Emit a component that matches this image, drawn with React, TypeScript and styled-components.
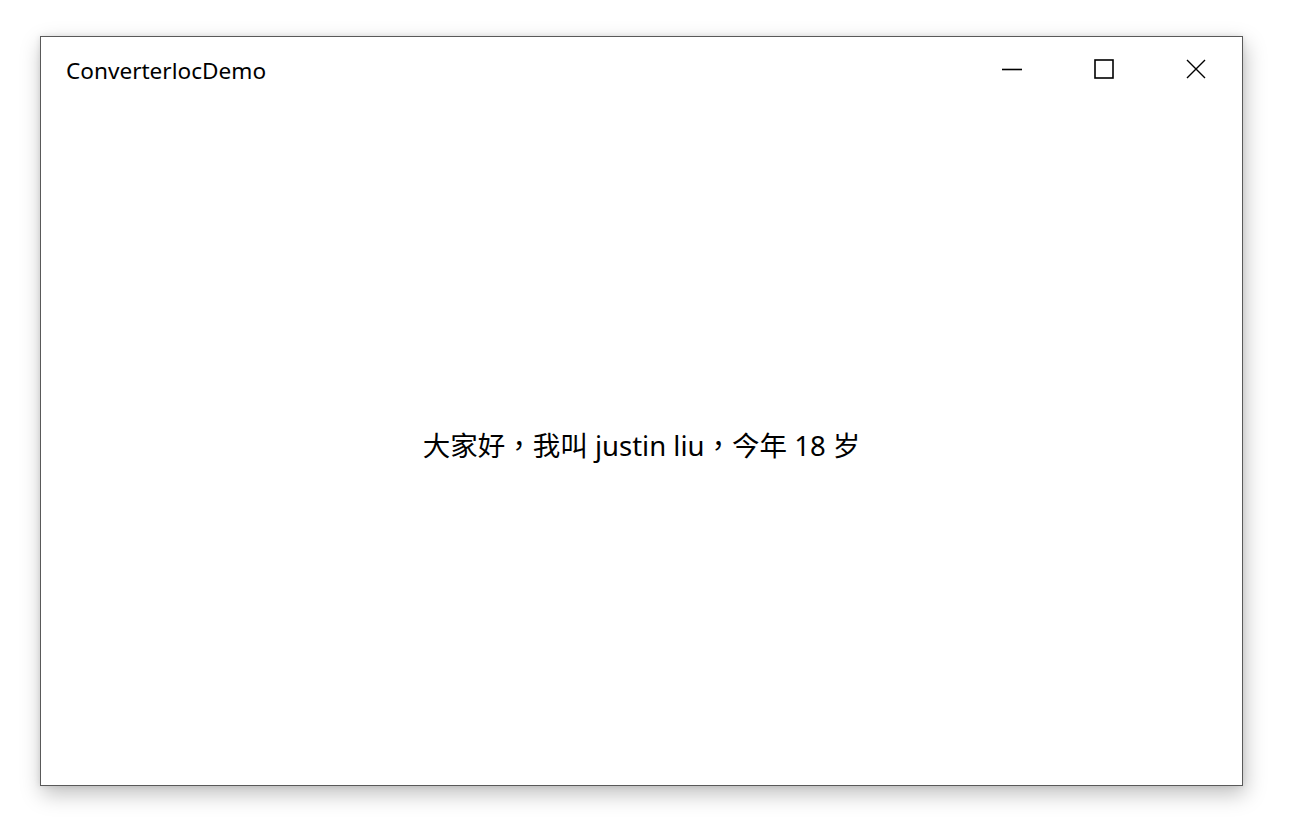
import React from "react";
import styled, { createGlobalStyle } from "styled-components";

const Global = createGlobalStyle`
  html, body { margin: 0; padding: 0; background: #ffffff; }
  body { font-family: "Noto Sans", "Noto Sans CJK SC", sans-serif; color: #000; }
`;

const Page = styled.div`
  width: 1305px;
  height: 827px;
  padding: 36px 0 0 40px;
  box-sizing: border-box;
  background: #ffffff;
`;

const Window = styled.div`
  width: 1203px;
  height: 750px;
  box-sizing: border-box;
  border: 1px solid #595959;
  background: #ffffff;
  box-shadow: 2px 8px 20px rgba(0, 0, 0, 0.25), 0 0 6px rgba(0, 0, 0, 0.1);
  display: flex;
  flex-direction: column;
`;

const TitleBar = styled.div`
  height: 63px;
  display: flex;
  align-items: center;
  flex-shrink: 0;
`;

const Title = styled.div`
  flex: 1;
  padding-left: 25px;
  font-family: "Noto Sans", sans-serif;
  font-size: 22.6px;
  line-height: 30px;
  margin-top: 5px;
`;

const CaptionButton = styled.div`
  width: 92px;
  height: 63px;
  display: flex;
  align-items: center;
  justify-content: center;
`;

const Content = styled.div`
  flex: 1;
  display: flex;
  align-items: center;
  justify-content: center;
`;

const Message = styled.div`
  font-family: "Noto Sans", "Noto Sans CJK SC", sans-serif;
  font-size: 27.5px;
  margin-top: 2px;
  white-space: nowrap;
`;

const Punct = styled.span`
  font-family: "Noto Sans CJK TC", sans-serif;
`;

export default function App() {
  return (
    <>
      <Global />
      <Page>
        <Window>
          <TitleBar>
            <Title>ConverterlocDemo</Title>
            <CaptionButton>
              <svg width="20" height="20" viewBox="0 0 20 20">
                <line x1="0" y1="10.5" x2="20" y2="10.5" stroke="#000" strokeWidth="1.6" />
              </svg>
            </CaptionButton>
            <CaptionButton>
              <svg width="20" height="20" viewBox="0 0 20 20">
                <rect x="1" y="1" width="18" height="18" fill="none" stroke="#000" strokeWidth="1.6" />
              </svg>
            </CaptionButton>
            <CaptionButton>
              <svg width="20" height="20" viewBox="0 0 20 20">
                <path d="M1 1 L19 19 M19 1 L1 19" stroke="#000" strokeWidth="1.4" />
              </svg>
            </CaptionButton>
          </TitleBar>
          <Content>
            <Message>
              大家好<Punct>，</Punct>我叫 justin liu<Punct>，</Punct>今年 18 岁
            </Message>
          </Content>
        </Window>
      </Page>
    </>
  );
}
